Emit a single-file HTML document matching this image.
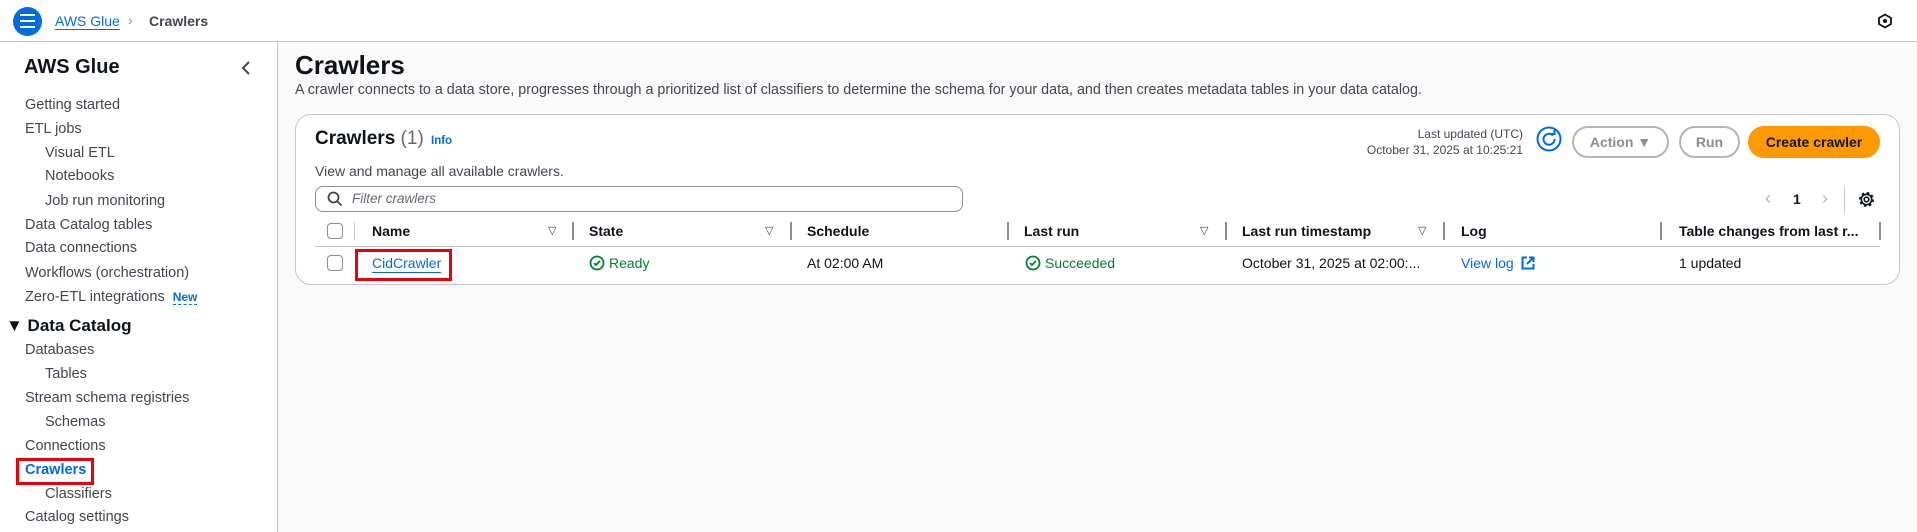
<!DOCTYPE html>
<html><head><meta charset="utf-8"><style>
*{box-sizing:border-box;margin:0;padding:0}
body{width:1917px;height:532px;overflow:hidden;background:#fafafa;font-family:"Liberation Sans",sans-serif;color:#0f141a;position:relative}
.a{position:absolute;white-space:nowrap}
.top{left:0;top:0;width:1917px;height:42px;background:#fff;border-bottom:1px solid #c6c6cd}
.side{left:0;top:42px;width:278px;height:490px;background:#fff;border-right:1px solid #c6c6cd}
.nav{font-size:14.5px;color:#424650;left:25px}
.sub{left:45px}
.card{left:295px;top:114px;width:1605px;height:171px;background:#fff;border:1px solid #c6c6cd;border-radius:16px}
.th{font-size:14px;font-weight:bold;top:223px}
.dv{width:2px;height:18px;background:#8c8c94;top:222px}
.srt{font-size:11px;top:224px;color:#424650}
.btn{border:2px solid #b4b4bb;border-radius:20px;color:#8c8c94;font-weight:bold;font-size:14px;text-align:center;line-height:28px;height:32px;top:126px}
.cb{width:16px;height:16px;border:1.5px solid #8c8c94;border-radius:4px;background:#fff}
</style></head><body>
<div class="a top"></div>
<div class="a" style="left:13px;top:7px;width:29px;height:29px;border-radius:50%;background:#006ce0"></div>
<div class="a" style="left:20px;top:14px;width:15px;height:2px;background:#fff;box-shadow:0 6px 0 #fff,0 12px 0 #fff"></div>
<div class="a" style="left:55px;top:13px;font-size:14px;color:#006ce0;border-bottom:1px solid #006ce0;line-height:16px">AWS Glue</div>
<div class="a" style="left:128px;top:12px;font-size:14px;color:#8c8c94">&#x203A;</div>
<div class="a" style="left:149px;top:13px;font-size:14px;font-weight:bold;color:#424650">Crawlers</div>
<svg class="a" style="left:1877px;top:13px" width="16" height="16" viewBox="0 0 16 16"><path d="M8 1.5 14 5v6l-6 3.5L2 11V5z" fill="none" stroke="#0f141a" stroke-width="1.8"/><circle cx="8" cy="8" r="2" fill="#0f141a"/></svg>
<div class="a side"></div>
<div class="a" style="left:24px;top:56px;font-size:20px;font-weight:bold">AWS Glue</div>
<svg class="a" style="left:241px;top:61px" width="12" height="14"><path d="M8 1 2 7l6 6" fill="none" stroke="#424650" stroke-width="2"/></svg>
<div class="a nav" style="top:97px">Getting started</div>
<div class="a nav" style="top:121px">ETL jobs</div>
<div class="a nav sub" style="top:145px">Visual ETL</div>
<div class="a nav sub" style="top:168px">Notebooks</div>
<div class="a nav sub" style="top:193px">Job run monitoring</div>
<div class="a nav" style="top:217px">Data Catalog tables</div>
<div class="a nav" style="top:240px">Data connections</div>
<div class="a nav" style="top:265px">Workflows (orchestration)</div>
<div class="a nav" style="top:289px">Zero-ETL integrations <span style="color:#006ce0;font-weight:bold;font-size:12px;border-bottom:1px dashed #006ce0;margin-left:4px">New</span></div>
<div class="a" style="left:6px;top:316px;font-size:17px;font-weight:bold">&#9660; Data Catalog</div>
<div class="a nav" style="top:342px">Databases</div>
<div class="a nav sub" style="top:366px">Tables</div>
<div class="a nav" style="top:390px">Stream schema registries</div>
<div class="a nav sub" style="top:414px">Schemas</div>
<div class="a nav" style="top:438px">Connections</div>
<div class="a nav" style="top:462px;color:#006ce0;font-weight:bold">Crawlers</div>
<div class="a" style="left:16px;top:458px;width:78px;height:27px;border:3px solid #e8000c"></div>
<div class="a nav sub" style="top:486px">Classifiers</div>
<div class="a nav" style="top:509px">Catalog settings</div>

<div class="a" style="left:295px;top:50px;font-size:26px;font-weight:bold">Crawlers</div>
<div class="a" style="left:295px;top:82px;font-size:14.3px;color:#424650">A crawler connects to a data store, progresses through a prioritized list of classifiers to determine the schema for your data, and then creates metadata tables in your data catalog.</div>
<div class="a card"></div>
<div class="a" style="left:315px;top:128px;font-size:19px;font-weight:bold">Crawlers <span style="font-weight:normal;color:#656871">(1)</span></div>
<div class="a" style="left:431px;top:135px;font-size:11.5px;font-weight:bold;color:#006ce0">Info</div>
<div class="a" style="left:315px;top:163px;font-size:14px;color:#424650">View and manage all available crawlers.</div>
<div class="a" style="left:315px;top:186px;width:648px;height:26px;border:1px solid #8c8c94;border-radius:8px;background:#fff"></div>
<svg class="a" style="left:327px;top:191px" width="16" height="16"><circle cx="6.5" cy="6.5" r="5" fill="none" stroke="#424650" stroke-width="1.8"/><path d="m10 10 4.5 4.5" stroke="#424650" stroke-width="1.8"/></svg>
<div class="a" style="left:352px;top:191px;font-size:13.5px;font-style:italic;color:#656871">Filter crawlers</div>
<div class="a" style="left:1300px;top:126px;width:223px;text-align:right;font-size:12px;color:#424650;line-height:16px">Last updated (UTC)<br>October 31, 2025 at 10:25:21</div>
<svg class="a" style="left:1536px;top:126px" width="26" height="26" viewBox="0 0 26 26"><circle cx="13" cy="13" r="11.5" fill="none" stroke="#006ce0" stroke-width="2"/><path d="M17 9.5A5.5 5.5 0 1 0 18.5 13" fill="none" stroke="#006ce0" stroke-width="2"/><path d="M14 8h4.5V4" fill="none" stroke="#006ce0" stroke-width="2"/></svg>
<div class="a btn" style="left:1572px;width:97px">Action &#9660;</div>
<div class="a btn" style="left:1679px;width:61px">Run</div>
<div class="a btn" style="left:1748px;width:132px;background:#ff9900;border-color:#ff9900;color:#0f141a">Create crawler</div>
<div class="a" style="left:1765px;top:188px;font-size:18px;color:#b4b4bb">&#x2039;</div>
<div class="a" style="left:1793px;top:191px;font-size:14px;font-weight:bold">1</div>
<div class="a" style="left:1822px;top:188px;font-size:18px;color:#b4b4bb">&#x203A;</div>
<div class="a" style="left:1844px;top:186px;width:1px;height:28px;background:#c6c6cd"></div>
<svg class="a" style="left:1858px;top:191px" width="17" height="17" viewBox="0 0 17 17"><circle cx="8.5" cy="8.5" r="2.3" fill="none" stroke="#0f141a" stroke-width="1.6"/><path d="M7 1.5h3l.5 2 1.7 1-2-.1M8.5 1.5" fill="none"/><circle cx="8.5" cy="8.5" r="5.2" fill="none" stroke="#0f141a" stroke-width="1.6"/><circle cx="8.5" cy="8.5" r="6.5" fill="none" stroke="#0f141a" stroke-width="2" stroke-dasharray="2.6 2.5"/></svg>
<div class="a cb" style="left:327px;top:223px"></div>
<div class="a dv" style="left:354px;width:1px;background:#c6c6cd"></div>
<div class="a th" style="left:372px">Name</div><div class="a srt" style="left:548px">&#9661;</div><div class="a dv" style="left:572px"></div>
<div class="a th" style="left:589px">State</div><div class="a srt" style="left:765px">&#9661;</div><div class="a dv" style="left:790px"></div>
<div class="a th" style="left:807px">Schedule</div><div class="a dv" style="left:1007px"></div>
<div class="a th" style="left:1024px">Last run</div><div class="a srt" style="left:1200px">&#9661;</div><div class="a dv" style="left:1225px"></div>
<div class="a th" style="left:1242px">Last run timestamp</div><div class="a srt" style="left:1418px">&#9661;</div><div class="a dv" style="left:1443px"></div>
<div class="a th" style="left:1461px">Log</div><div class="a dv" style="left:1660px"></div>
<div class="a th" style="left:1679px">Table changes from last r...</div><div class="a dv" style="left:1879px"></div>
<div class="a" style="left:315px;top:246px;width:1565px;height:1px;background:#c6c6cd"></div>
<div class="a cb" style="left:327px;top:255px"></div>
<div class="a" style="left:372px;top:255px;font-size:14px;color:#006ce0;border-bottom:1px solid #006ce0;line-height:17px">CidCrawler</div>
<div class="a" style="left:355px;top:249px;width:97px;height:32px;border:3px solid #e8000c"></div>
<svg class="a" style="left:589px;top:255px" width="16" height="16"><circle cx="8" cy="8" r="6.5" fill="#fff" stroke="#00802f" stroke-width="1.8"/><path d="m5 8 2 2 4-4" fill="none" stroke="#00802f" stroke-width="1.8"/></svg>
<div class="a" style="left:609px;top:255px;font-size:14px;color:#00802f">Ready</div>
<div class="a" style="left:807px;top:255px;font-size:14px">At 02:00 AM</div>
<svg class="a" style="left:1025px;top:255px" width="16" height="16"><circle cx="8" cy="8" r="6.5" fill="#fff" stroke="#00802f" stroke-width="1.8"/><path d="m5 8 2 2 4-4" fill="none" stroke="#00802f" stroke-width="1.8"/></svg>
<div class="a" style="left:1045px;top:255px;font-size:14px;color:#00802f">Succeeded</div>
<div class="a" style="left:1242px;top:255px;font-size:14px">October 31, 2025 at 02:00:...</div>
<div class="a" style="left:1461px;top:255px;font-size:14px;color:#006ce0">View log</div>
<svg class="a" style="left:1521px;top:256px" width="14" height="14"><path d="M6 1.5H1.5v11h11V8M8 1.5h4.5V6M12.5 1.5 6 8" fill="none" stroke="#006ce0" stroke-width="2"/></svg>
<div class="a" style="left:1679px;top:255px;font-size:14px">1 updated</div>
</body></html>
